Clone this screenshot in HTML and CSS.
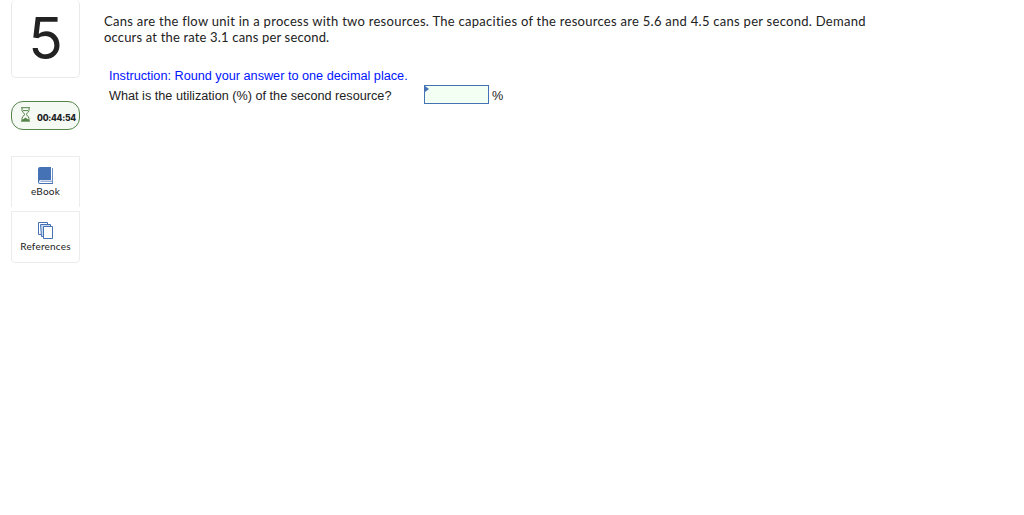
FILE: index.html
```html
<!DOCTYPE html>
<html lang="en">
<head>
    <meta charset="UTF-8">
    <meta name="viewport" content="width=device-width, initial-scale=1.0">
    <title>Question 5</title>
    <link rel="stylesheet" href="styles.css">
</head>
<body>
    <div class="page">
        <aside class="sidebar">
            <div class="question-number">5</div>
            <div class="timer">
                <svg class="hourglass" width="9" height="15" viewBox="0 0 9 15" fill="none" stroke="#55834a">
                    <path d="M0 .7h9M0 14.2h9M1 1v2.5Q1 5 4 7.4Q1 9.5 1 11.5V14M8 1v2.5Q8 5 5 7.4Q8 9.5 8 11.5V14M2 3.6h5"/>
                    <path d="M1 14v-1.5q1.5-.2 3.5-2q2 1.8 3.5 2V14z" fill="#55834a" stroke="none"/>
                </svg>
                <span>00:44:54</span>
            </div>
            <nav class="tools">
                <a class="tool">
                    <svg width="16" height="17" viewBox="0 0 16 17">
                        <path d="M2 0h11v13H2.5Q1.3 13 1 14.5T2.5 16H15v1H2Q0 17 0 15V2Q0 0 2 0z" fill="#4472b5"/>
                        <path d="M14.5 1v15.5M2.5 14.2H14" stroke="#4472b5" stroke-width=".8" fill="none"/>
                    </svg>
                    <span>eBook</span>
                </a>
                <a class="tool">
                    <svg width="16" height="17" viewBox="0 0 16 17" stroke="#4472b5">
                        <path d="M.5.5h9v12h-9z" fill="#fff"/>
                        <path d="M2.5 2.5h10v12H3.5z" fill="#c9d8ee"/>
                        <path d="M5.5 4.5h9v12h-9z" fill="#fff"/>
                    </svg>
                    <span>References</span>
                </a>
            </nav>
        </aside>
        <main class="question">
            <p class="prompt">
                <span class="first-line">Cans are the flow unit in a process with two resources. The capacities of the resources are 5.6 and 4.5 cans per second. Demand</span><br>
                <span class="second-line">occurs at the rate 3.1 cans per second.</span>
            </p>
            <div class="answer">
                <p class="instruction">Instruction: Round your answer to one decimal place.</p>
                <div class="answer-row">
                    <label for="utilization">What is the utilization (%) of the second resource?</label>
                    <span class="field"><input type="text" id="utilization"></span>
                    <span>%</span>
                </div>
            </div>
        </main>
    </div>
</body>
</html>
```
FILE: styles.css
```css
* {
    box-sizing: border-box;
}
body {
    margin: 0;
    background-color: #fff;
    color: #222;
    font-family: Lato, sans-serif;
}
.page {
    display: flex;
    gap: 24px;
    padding-left: 11px;
}
.sidebar {
    width: 69px;
    flex-shrink: 0;
}
.question-number {
    height: 78px;
    padding-top: 4px;
    border: 1px solid #e9e9e9;
    border-top: none;
    border-radius: 5px;
    font-family: Inter, sans-serif;
    font-size: 57px;
    line-height: 70px;
    text-align: center;
}
.timer {
    display: flex;
    height: 29px;
    margin-top: 23px;
    padding: 5px 0 0 9px;
    gap: 7px;
    border: 1px solid #55834a;
    border-radius: 12px;
    background-color: #f5f9f3;
    font-family: Inter, sans-serif;
    font-size: 8.5px;
    font-weight: 800;
    line-height: 23px;
    letter-spacing: -0.25px;
}
.hourglass {
    flex-shrink: 0;
}
.tools {
    display: flex;
    flex-direction: column;
    gap: 4px;
    margin-top: 26px;
}
.tool {
    display: flex;
    flex-direction: column;
    align-items: center;
    height: 51px;
    padding-top: 10px;
    border: 1px solid #ececec;
    border-bottom: none;
    font-size: 10px;
    line-height: 14px;
    letter-spacing: 0.2px;
}
.tool:last-child {
    height: 52px;
    border-bottom: 1px solid #ececec;
    border-radius: 0 0 4px 4px;
}
.question {
    padding-top: 13px;
}
.prompt {
    margin: 0;
    font-size: 13px;
    line-height: 16px;
    letter-spacing: 0.276px;
    white-space: nowrap;
}
.second-line {
    letter-spacing: 0.17px;
}
.answer {
    margin: 23px 0 0 5px;
    font-family: "Liberation Sans", Arial, sans-serif;
    font-size: 12.68px;
}
.instruction {
    margin: 0;
    color: #0014ff;
    line-height: 16px;
}
.answer-row {
    display: flex;
    margin-top: 1px;
    line-height: 22px;
}
.answer-row label {
    width: 315px;
}
.field {
    position: relative;
    height: 19px;
    margin-right: 3px;
}
.field input {
    display: block;
    width: 65px;
    height: 19px;
    border: 1px solid #4472b5;
    background-color: #f4fff3;
}
/* marker in the corner of the answer box */
.field::before {
    content: "";
    position: absolute;
    top: 1px;
    left: 1px;
    border-left: 4px solid #4472b5;
    border-top: 3px solid transparent;
    border-bottom: 3px solid transparent;
}
```
